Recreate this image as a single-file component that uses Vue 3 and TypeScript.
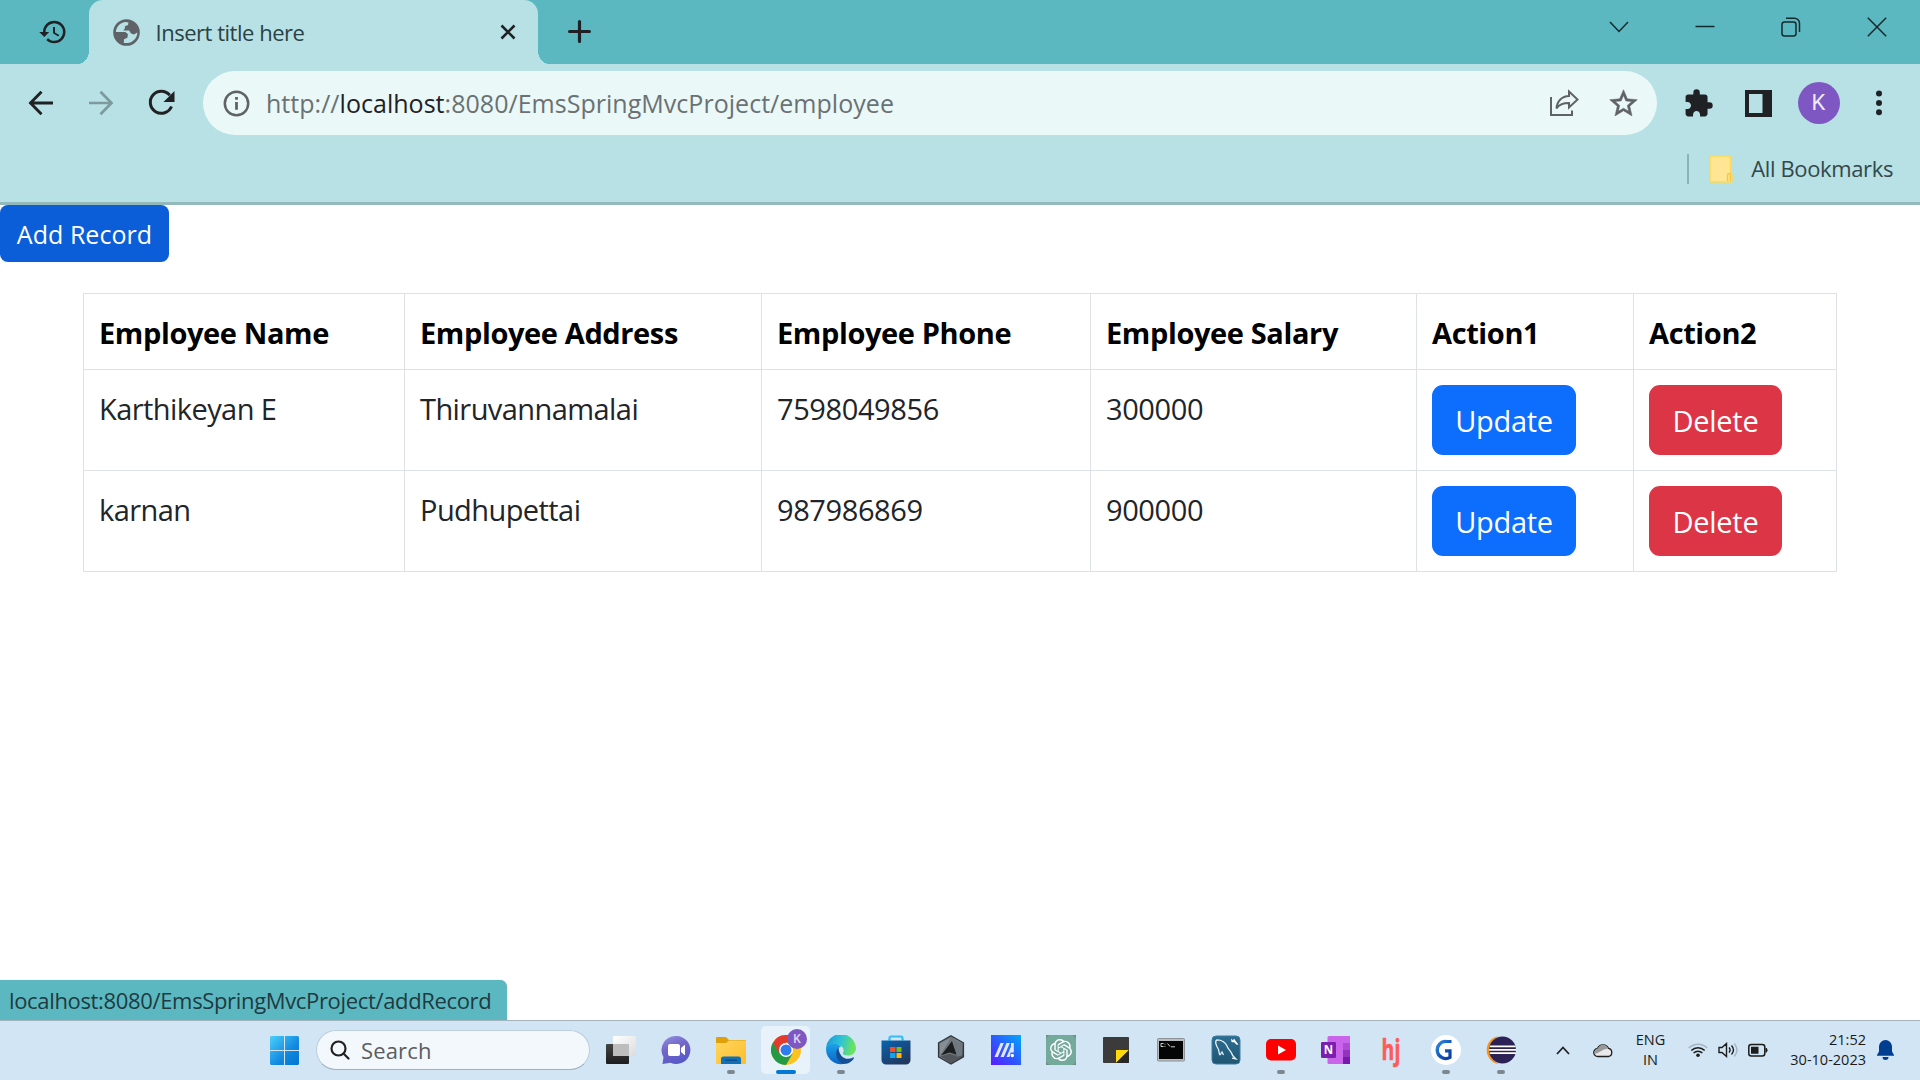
<script setup lang="ts">
interface Employee {
  name: string
  address: string
  phone: string
  salary: string
}

const employees: Employee[] = [
  { name: 'Karthikeyan E', address: 'Thiruvannamalai', phone: '7598049856', salary: '300000' },
  { name: 'karnan', address: 'Pudhupettai', phone: '987986869', salary: '900000' },
]

const headings: string[] = ['Employee Name', 'Employee Address', 'Employee Phone', 'Employee Salary', 'Action1', 'Action2']
</script>

<template>
  <div class="screen">
    <header class="tabstrip">
      <div class="tab-search">
        <svg width="30" height="30" viewBox="0 0 24 24" fill="#202124"><path d="M13 3a9 9 0 0 0-9 9H1l4 4 4-4H6a7 7 0 1 1 7 7c-1.93 0-3.68-.79-4.94-2.06l-1.42 1.42A8.95 8.95 0 0 0 13 21a9 9 0 0 0 0-18zm-1 5v5l4.2 2.5.8-1.2-3.4-2V8z" /></svg>
      </div>
      <div class="tab">
        <svg class="globe" width="27" height="27" viewBox="0 0 27 27">
          <circle cx="13.5" cy="13.5" r="13.3" fill="#5f6368" />
          <path d="M3 11.5C4 7 7.500 3.500 12.500 2.900L15.500 3.500L15 6L11.800 7.200L12 9.200L10.300 11.500H16.200L18 14.500L21 15.500L24.300 13.500C24.500 18.500 20 23.500 14.500 24.100L10.800 23.900V20.500L14.500 18.500L14.800 15L12.500 13.300L3 13Z" fill="#b7e1e4" />
          <path d="M3 13H12L14.500 15.500L13.500 18L10.500 19V23.800C6.500 22.800 3.200 18 3 13Z" fill="#5f6368" />
        </svg>
        <span class="tab-title">Insert title here</span>
        <svg class="tab-close" width="16" height="16" viewBox="0 0 16 16" fill="none" stroke="#202124" stroke-width="2.6"><path d="M1.500 1.500l13 13M14.500 1.500l-13 13" /></svg>
      </div>
      <svg class="new-tab" width="23" height="23" viewBox="0 0 23 23" fill="none" stroke="#202124" stroke-width="3.200" stroke-linecap="round"><path d="M11.500 1.600v19.800M1.600 11.500h19.800" /></svg>
      <div class="window-controls">
        <svg width="20" height="20" viewBox="0 0 20 20"><path d="M1 5l9 9.500L19 5" /></svg>
        <svg width="20" height="20" viewBox="0 0 20 20"><path d="M.5 9.500h19" /></svg>
        <svg width="20" height="20" viewBox="0 0 20 20"><rect x="1" y="5" width="14" height="14" rx="2.500" /><path d="M5 1.300h8.500a5 5 0 0 1 5 5V15" /></svg>
        <svg width="20" height="20" viewBox="0 0 20 20"><path d="M.8.8l18.400 18.400M19.200.8L.8 19.200" /></svg>
      </div>
    </header>

    <div class="toolbar">
      <div class="slot"><svg width="26" height="26" viewBox="0 0 26 26" fill="none" stroke="#202124" stroke-width="2.900"><path d="M25 13H3M13.500 1.800L2.500 13l11 11.200" /></svg></div>
      <div class="slot"><svg width="26" height="26" viewBox="0 0 26 26" fill="none" stroke="#7d9a9d" stroke-width="2.700"><path d="M1 13h22M12.500 1.800l11 11.200-11 11.200" /></svg></div>
      <div class="slot reload"><svg width="28" height="28" viewBox="0 0 28 28" fill="none"><path d="M23.500 17.500A11 11 0 1 1 21.800 6.300" stroke="#202124" stroke-width="3" /><path d="M26.500 2v11H15.500z" fill="#202124" /></svg></div>
      <div class="omnibox">
        <svg class="info" width="27" height="27" viewBox="0 0 27 27" fill="none" stroke="#5f6368" stroke-width="2.500"><circle cx="13.500" cy="13.500" r="11.700" /><path d="M13.500 12v7.800M13.500 7v2.800" stroke-width="2.800" /></svg>
        <span class="url"><span>http://</span><span class="host">localhost</span><span class="path">:8080/EmsSpringMvcProject/employee</span></span>
        <div class="slot"><svg width="30" height="28" viewBox="0 0 30 28" fill="none" stroke="#5f6368" stroke-width="2"><path d="M2 8v18h21v-4.500M20 2.500l8.500 8L20 18.500V14c-6 0-10 1.500-12.500 5.500C8 12 13 7.200 20 7z" /></svg></div>
        <div class="slot star"><svg width="33" height="33" viewBox="0 0 24 24" fill="#5f6368" stroke="#5f6368" stroke-width=".4"><path d="M22 9.240l-7.190-.62L12 2 9.190 8.630 2 9.240l5.460 4.730L5.820 21 12 17.270 18.180 21l-1.630-7.030L22 9.240zM12 15.400l-3.760 2.270 1-4.280-3.320-2.880 4.380-.38L12 6.100l1.710 4.040 4.380.38-3.320 2.880 1 4.280L12 15.400z" /></svg></div>
      </div>
      <div class="slot first"><svg width="31" height="31" viewBox="0 0 24 24" fill="#202124"><path d="M20.500 11H19V7c0-1.100-.9-2-2-2h-4V3.500a2.500 2.500 0 0 0-5 0V5H4c-1.100 0-1.990.9-1.990 2v3.800H3.500c1.490 0 2.700 1.210 2.700 2.700s-1.210 2.700-2.700 2.700H2V20c0 1.100.9 2 2 2h3.800v-1.500c0-1.490 1.210-2.700 2.700-2.700s2.700 1.210 2.700 2.700V22H17c1.100 0 2-.9 2-2v-4h1.500a2.500 2.500 0 0 0 0-5z" /></svg></div>
      <div class="slot"><svg width="27" height="27" viewBox="0 0 27 27"><path fill="#202124" fill-rule="evenodd" d="M0 0h27v27H0zM4 4v19h13.500V4z" /></svg></div>
      <div class="slot profile-slot"><span class="avatar">K</span></div>
      <div class="slot"><svg width="8" height="26" viewBox="0 0 8 26" fill="#202124"><circle cx="4" cy="3.500" r="3" /><circle cx="4" cy="13" r="3" /><circle cx="4" cy="22.300" r="3" /></svg></div>
    </div>

    <div class="bookmarks">
      <span class="divider"></span>
      <svg width="24" height="28" viewBox="0 0 24 28"><path d="M1 2a1 1 0 0 1 1-1h18a1.500 1.500 0 0 1 1.500 1.500v15.500a2 2 0 0 1 1.500 2v6a1 1 0 0 1-1 1H2a1 1 0 0 1-1-1z" fill="#ffe694" stroke="#fdd955" stroke-width="1.500" /><path d="M18.500 26v-6a1.500 1.500 0 0 1 3 0v6" fill="#ffe082" stroke="#f0c84a" stroke-width="1.300" /></svg>
      <span class="bookmark-label">All Bookmarks</span>
    </div>

    <main class="page">
      <button class="btn btn-add">Add Record</button>
      <table>
        <colgroup><col class="c1" /><col class="c2" /><col class="c3" /><col class="c4" /><col class="c5" /><col class="c6" /></colgroup>
        <thead>
          <tr><th v-for="h in headings" :key="h"><span>{{ h }}</span></th></tr>
        </thead>
        <tbody>
          <tr v-for="e in employees" :key="e.name">
            <td>{{ e.name }}</td>
            <td>{{ e.address }}</td>
            <td class="num">{{ e.phone }}</td>
            <td class="num">{{ e.salary }}</td>
            <td class="action"><button class="btn btn-lg btn-update">Update</button></td>
            <td class="action"><button class="btn btn-lg btn-delete">Delete</button></td>
          </tr>
        </tbody>
      </table>
    </main>

    <div class="status"><span>localhost:8080/EmsSpringMvcProject/addRecord</span></div>

    <footer class="taskbar">
      <svg class="start" width="29" height="29" viewBox="0 0 29 29">
        <defs><linearGradient id="win" gradientUnits="userSpaceOnUse" x1="0" y1="0" x2="29" y2="29"><stop offset="0" stop-color="#4bd0fb" /><stop offset=".6" stop-color="#1288df" /><stop offset="1" stop-color="#0275d0" /></linearGradient></defs>
        <path fill="url(#win)" d="M1 0h13v14H0V1zM15 0h13l1 1v13H15zM0 15h14v14H1l-1-1zM15 15h14v13l-1 1H15z" />
      </svg>
      <div class="search">
        <svg width="20" height="20" viewBox="0 0 20 20" fill="none" stroke="#222" stroke-width="2.200" stroke-linecap="round"><circle cx="8.500" cy="8.500" r="7" /><path d="M13.500 13.500l5 5" /></svg>
        <span>Search</span>
      </div>
      <div class="apps">
        <div class="app">
          <svg width="30" height="30" viewBox="0 0 30 30"><defs><linearGradient id="tv" x2="0" y2="1"><stop stop-color="#444" /><stop offset="1" stop-color="#1d1d1d" /></linearGradient><linearGradient id="tv2" x2="1" y2="1"><stop stop-color="#fff" /><stop offset="1" stop-color="#dcdcdc" /></linearGradient></defs><rect x="0" y="9" width="23" height="20" rx="1" fill="url(#tv)" /><rect x="7" y="1" width="23" height="20" rx="1" fill="url(#tv2)" /><path d="M7 9h16v12H7z" fill="#bdbdbd" /></svg>
        </div>
        <div class="app">
          <svg width="30" height="30" viewBox="0 0 30 30"><defs><linearGradient id="ch" x1=".2" y1="0" x2=".6" y2="1"><stop stop-color="#8d8be0" /><stop offset=".4" stop-color="#7467c8" /><stop offset="1" stop-color="#5558c8" /></linearGradient></defs><path d="M15.500 1a14 14 0 1 1-6 26.700L1.500 29l1-7A14 14 0 0 1 15.500 1z" fill="url(#ch)" /><rect x="7" y="9" width="12" height="12" rx="2" fill="#fff" /><path d="M20 13l3.500-3h.5v10h-.5L20 17z" fill="#fff" /></svg>
        </div>
        <div class="app">
          <svg width="30" height="30" viewBox="0 0 30 30"><defs><linearGradient id="fo" x2="1" y2="1"><stop stop-color="#ffd75e" /><stop offset="1" stop-color="#fdbc2c" /></linearGradient></defs><path d="M0 3a1 1 0 0 1 1-1h9l3 3h16a1 1 0 0 1 1 1v6H0z" fill="#dfa00a" /><path d="M0 8h10l3-2.500h16a1 1 0 0 1 1 1V28a1 1 0 0 1-1 1H1a1 1 0 0 1-1-1z" fill="url(#fo)" /><path d="M5 29v-5a2.500 2.500 0 0 1 2.500-2.500h15A2.500 2.500 0 0 1 25 24v5z" fill="#1070b8" /><path d="M9 25.200h12" stroke="#0a4b85" stroke-width="1.300" /></svg>
          <i class="dot"></i>
        </div>
        <div class="app active">
          <svg width="30" height="30" viewBox="0 0 30 30"><circle cx="15" cy="15" r="15" fill="#fcc31e" /><path d="M15 15L2 7.500A15 15 0 0 0 15 30l6.500-11.300z" fill="#249a45" /><path d="M15 15V7.500h13A15 15 0 0 0 2 7.500l6.500 11.200z" fill="#e33b2e" /><circle cx="15" cy="15" r="7" fill="#fff" /><circle cx="15" cy="15" r="5.500" fill="#2f7cee" /></svg>
          <span class="profile">K</span>
          <i class="dot wide"></i>
        </div>
        <div class="app">
          <svg width="30" height="30" viewBox="0 0 30 30"><defs><linearGradient id="e1" x2="1" y2=".2"><stop stop-color="#1b93dd" /><stop offset=".55" stop-color="#2fc4d5" /><stop offset="1" stop-color="#6be35c" /></linearGradient><linearGradient id="e2" x2="0" y2="1"><stop stop-color="#1ba0e8" /><stop offset="1" stop-color="#0b62c4" /></linearGradient></defs><path d="M0 15A15 15 0 0 1 30 13c0 5-4 7.500-8 7.500-3.500 0-6-1.300-5-3 2-3.500-1-7.500-6-7.500C5.500 10 1 12 0 15z" fill="url(#e1)" /><path d="M0 15c1-4.500 6-6.500 10-5.800 2 .3 3.800 1.200 5 2.500-4 1-5 5.300-3.500 9C13 25 17 28 22 27.500A15 15 0 0 1 0 15z" fill="url(#e2)" /><path d="M12.500 12.500c-4.500 5-2 13 4 16 5 1.200 9-1.500 11.500-5.300.3-.6-.2-1-.8-.7-7 3.500-14 0-14.700-10z" fill="#124f95" /></svg>
          <i class="dot"></i>
        </div>
        <div class="app">
          <svg width="30" height="30" viewBox="0 0 30 30"><defs><linearGradient id="st" x2=".6" y2="1"><stop stop-color="#0863b1" /><stop offset="1" stop-color="#22395f" /></linearGradient></defs><path d="M8.500 7V3a1.500 1.500 0 0 1 1.500-1.500h10A1.500 1.500 0 0 1 21.500 3v4" fill="none" stroke="#35bdf3" stroke-width="2" /><path d="M.5 5.500h29V25a4.500 4.500 0 0 1-4.500 4.500H5A4.500 4.500 0 0 1 .5 25z" fill="url(#st)" /><path d="M8.500 5.500V3.500M21.500 5.500v-2" stroke="#35bdf3" stroke-width="2" /><path d="M9 12h5.500v5H9z" fill="#f2502a" /><path d="M15.500 12h5v5h-5z" fill="#7fba10" /><path d="M9 18h5.500v5H9z" fill="#12a4ee" /><path d="M15.500 18h5v5h-5z" fill="#ffb900" /></svg>
        </div>
        <div class="app">
          <svg width="30" height="30" viewBox="0 0 30 30"><defs><linearGradient id="ar" x2="1" y2="1"><stop stop-color="#555b60" /><stop offset=".5" stop-color="#7d858b" /><stop offset="1" stop-color="#34383c" /></linearGradient></defs><path d="M15 .8l12.500 7v14L15 29 2.500 21.800v-14z" fill="url(#ar)" stroke="#33373b" stroke-width="1.200" /><path d="M16 6l4.500 13.500-7-2-8.500 3z" fill="#1c1e20" /><path d="M15 2.500L4.500 19.500 3.500 8.500z" fill="#9aa3aa" opacity=".6" /><path d="M17 5l9 3.500v12l-5 1z" fill="#70787f" /><path d="M4.500 21.500l9-3 9 4-7.500 5.500z" fill="#50565b" /></svg>
        </div>
        <div class="app">
          <svg width="30" height="30" viewBox="0 0 30 30"><defs><linearGradient id="as" x1="0" y1="1" x2="1" y2="0"><stop stop-color="#5a1cff" /><stop offset=".45" stop-color="#2f55ff" /><stop offset="1" stop-color="#00a8ff" /></linearGradient></defs><path d="M0 0h30v30H0z" fill="url(#as)" /><path d="M3.500 22L9.500 8h3.300L6.800 22zM9.500 22l6-14h3.300l-6 14zM15.500 22l2.700-6.300L20 11.500V8h2.800v9.500H20v-1L18.500 22z" fill="#dfe6ff" /><circle cx="21.300" cy="20.500" r="1.700" fill="#fff" /></svg>
        </div>
        <div class="app">
          <svg width="30" height="30" viewBox="0 0 30 30"><path d="M0 0h30v30H0z" fill="#6f8d84" /><rect width="30" height="30" rx="5" fill="#74aa9c" /><svg x="4" y="4" width="22" height="22" viewBox="0 0 24 24"><path fill="#fff" d="M22.282 9.821a5.985 5.985 0 0 0-.516-4.910 6.046 6.046 0 0 0-6.510-2.900A6.065 6.065 0 0 0 4.981 4.182a5.985 5.985 0 0 0-3.998 2.900 6.046 6.046 0 0 0 .743 7.097 5.980 5.980 0 0 0 .511 4.911 6.051 6.051 0 0 0 6.515 2.900A5.985 5.985 0 0 0 13.260 24a6.056 6.056 0 0 0 5.772-4.206 5.990 5.990 0 0 0 3.998-2.900 6.056 6.056 0 0 0-.748-7.073zM13.260 22.430a4.476 4.476 0 0 1-2.876-1.041l.142-.08 4.778-2.758a.795.795 0 0 0 .393-.681v-6.737l2.020 1.169a.071.071 0 0 1 .038.052v5.583a4.504 4.504 0 0 1-4.495 4.493zM3.600 18.304a4.471 4.471 0 0 1-.535-3.014l.142.085 4.783 2.758a.771.771 0 0 0 .780 0l5.843-3.368v2.332a.08.08 0 0 1-.033.062L9.740 19.950a4.500 4.500 0 0 1-6.140-1.646zM2.341 7.896a4.485 4.485 0 0 1 2.365-1.973V11.600a.766.766 0 0 0 .388.677l5.815 3.354-2.020 1.169a.076.076 0 0 1-.071 0l-4.830-2.787A4.504 4.504 0 0 1 2.341 7.872zm16.596 3.856l-5.833-3.388L15.119 7.200a.076.076 0 0 1 .071 0l4.830 2.791a4.494 4.494 0 0 1-.676 8.105v-5.678a.79.79 0 0 0-.407-.667zm2.010-3.024l-.141-.085-4.774-2.782a.776.776 0 0 0-.785 0L9.409 9.230V6.897a.066.066 0 0 1 .028-.061l4.830-2.787a4.499 4.499 0 0 1 6.680 4.660zM8.307 12.863l-2.020-1.164a.08.08 0 0 1-.038-.057V6.075a4.499 4.499 0 0 1 7.376-3.454l-.142.081L8.704 5.460a.795.795 0 0 0-.393.681zm1.097-2.365l2.602-1.500 2.607 1.500v2.999l-2.597 1.500-2.607-1.500z" /></svg></svg>
        </div>
        <div class="app">
          <svg width="30" height="30" viewBox="0 0 30 30"><rect x="2" y="2" width="26" height="26" rx="1" fill="#3b3b3b" /><path d="M15 15h13L15 28z" fill="#ffd90a" /><path d="M28 15v12a1 1 0 0 1-1 1H15z" fill="#272727" /></svg>
        </div>
        <div class="app">
          <svg width="30" height="30" viewBox="0 0 30 30"><rect x="1.500" y="3.500" width="27" height="22.500" rx="1" fill="#b9bcc0" stroke="#8e9296" /><path d="M3 6h24v18H3z" fill="#050505" /><path d="M5 8.500h2.500M5 8.500v3h2.500M9 8.800v.8M9 11v.8M11.500 8.500l2.500 3M15 11.800h4" fill="none" stroke="#d0d0d0" /></svg>
        </div>
        <div class="app">
          <svg width="30" height="30" viewBox="0 0 30 30"><defs><linearGradient id="my" x2="0" y2="1"><stop stop-color="#2c6d93" /><stop offset="1" stop-color="#1f5672" /></linearGradient></defs><rect x="1" y="1" width="28" height="28" rx="4" fill="url(#my)" stroke="#3f7c9f" /><path d="M9 20c-1.500-2-.5-4-2-6.500C5 10 3.500 6 6 4.800c5 0 8.500 3 10 6.200 1 3 3 4 4.500 7 .5 2.500 2 3.500 4.500 6l-4-.8M9 20l2-3 1.500 3" fill="none" stroke="#e6f0f5" stroke-width="1.300" /><path d="M20 3.500l2 2 1-2 2 3 2.500 3-2 .3-2-2.300-3-.5z" fill="#fff" /></svg>
        </div>
        <div class="app">
          <svg width="30" height="30" viewBox="0 0 30 30"><rect y="4" width="30" height="21.500" rx="5" fill="#f00" /><path d="M12 10.500l8 4.500-8 4.500z" fill="#fff" /></svg>
          <i class="dot"></i>
        </div>
        <div class="app">
          <svg width="30" height="30" viewBox="0 0 30 30"><path d="M8 1h21v28H8a1.500 1.500 0 0 1-1.500-1.500v-25A1.500 1.500 0 0 1 8 1z" fill="#ca64ea" /><path d="M22 8h7v7h-7z" fill="#ae4bd5" /><path d="M22 15h7v7h-7z" fill="#9332bf" /><path d="M22 22h7v7h-7z" fill="#7719aa" /><rect y="7" width="15" height="16" rx="1.200" fill="#7b20ac" /><text x="7.500" y="19" text-anchor="middle" font-family="'Open Sans',sans-serif" font-weight="700" font-size="11.500" fill="#fff">N</text></svg>
        </div>
        <div class="app"><span class="hj">hj</span></div>
        <div class="app">
          <svg width="30" height="30" viewBox="0 0 30 30"><defs><linearGradient id="gg" x2="1" y2="1"><stop stop-color="#2a8be6" /><stop offset=".6" stop-color="#1450b0" /><stop offset="1" stop-color="#0a3a9e" /></linearGradient></defs><circle cx="15" cy="15" r="15" fill="#fff" /><path d="M20.500 6.500h-5a8.500 8.500 0 1 0 3.500 15.800V15.800h-5" fill="none" stroke="url(#gg)" stroke-width="3.200" /></svg>
          <i class="dot"></i>
        </div>
        <div class="app">
          <svg width="30" height="30" viewBox="0 0 30 30"><path d="M12.500 1A14.200 14.200 0 0 0 12.500 29C8 26 5 21 5 15S8 4 12.500 1z" fill="#f7941e" /><circle cx="16.500" cy="15" r="13.500" fill="#2c2255" /><path d="M4 10.500h25.500v1.800H3.500zM3 14h27v1.800H3zM3.500 17.300H30V19H4z" fill="#fff" /></svg>
          <i class="dot"></i>
        </div>
      </div>
      <svg class="chevron" width="14" height="9" viewBox="0 0 14 9" fill="none" stroke="#222" stroke-width="1.800"><path d="M1 8l6-6.500L13 8" /></svg>
      <svg class="cloud" width="20" height="15" viewBox="0 0 20 15"><path d="M5 13.500a4 4 0 0 1-.5-8A6 6 0 0 1 15.500 5.300a4.200 4.200 0 0 1 0 8.200z" fill="#e9e9e9" stroke="#1e1e1e" stroke-width="1.300" /><path d="M1.800 8.500L3 6l2-.8A5.600 5.600 0 0 1 10 1.800c2.500 0 4 1.200 5 3.700L11 6.500 2.500 11z" fill="#999" /></svg>
      <div class="lang"><span>ENG</span><span>IN</span></div>
      <div class="tray">
        <svg width="20" height="16" viewBox="0 0 20 16" fill="none" stroke="#1c1c1c" stroke-width="1.500"><path d="M.8 6a13 13 0 0 1 18.400 0" stroke="#a5b4c0" /><path d="M3.300 8.500a9.500 9.500 0 0 1 13.400 0M5.600 11a6.300 6.300 0 0 1 8.800 0" /><circle cx="10" cy="13.300" r="1.800" fill="#1c1c1c" stroke="none" /></svg>
        <svg width="20" height="16" viewBox="0 0 20 16" fill="none" stroke="#1c1c1c" stroke-width="1.400"><path d="M1 5.500h3l4.500-4v13l-4.500-4H1zM11 5.500c1.300 1.500 1.300 3.500 0 5M13.500 3.500c2.500 2.800 2.500 6.200 0 9" /><path d="M16.200 1.500c3.500 4 3.500 9 0 13" stroke="#a5b4c0" /></svg>
        <svg width="20" height="16" viewBox="0 0 20 16"><rect x=".8" y="2.500" width="16" height="11.500" rx="2.500" fill="none" stroke="#1c1c1c" stroke-width="1.500" /><path d="M3 4.700h7.500v7H3zM17.500 6h1.200l1 2.200-1 2.300h-1.200z" fill="#1c1c1c" /></svg>
      </div>
      <div class="clock"><span>21:52</span><span>30-10-2023</span></div>
      <svg class="bell" width="17" height="20" viewBox="0 0 17 20" fill="#003e92"><path d="M8.500 0a6.500 6.500 0 0 1 6.500 6.500v5l2 3.500v.8H0V15l2-3.500v-5A6.500 6.500 0 0 1 8.500 0zM5.500 17h6a3 3 0 0 1-6 0z" /></svg>
    </footer>
  </div>
</template>

<style>
html,
body {
  margin: 0;
  overflow: hidden;
}
</style>

<style scoped>
.screen {
  position: relative;
  width: 1920px;
  height: 1080px;
  display: flex;
  flex-direction: column;
  background: #fff;
  font-family: 'Open Sans', 'Noto Sans', sans-serif;
  color: #212529;
  overflow: hidden;
  white-space: nowrap;
}
svg {
  display: block;
  flex: none;
}
.tabstrip {
  height: 64px;
  flex: none;
  display: flex;
  background: #5bb8c1;
}
.tab-search {
  width: 89px;
  display: flex;
  align-items: center;
  box-sizing: border-box;
  padding-left: 37.500px;
}
.tab {
  position: relative;
  width: 449px;
  box-sizing: border-box;
  display: flex;
  align-items: center;
  padding: 0 22px 0 24px;
  background: #b7e1e4;
  border-radius: 14px 14px 0 0;
}
.tab::before,
.tab::after {
  content: '';
  position: absolute;
  bottom: 0;
  width: 11px;
  height: 13px;
}
.tab::before {
  left: -11px;
  background: radial-gradient(ellipse 11px 13px at 0 0, transparent 98%, #b7e1e4 100%);
}
.tab::after {
  right: -11px;
  background: radial-gradient(ellipse 11px 13px at 100% 0, transparent 98%, #b7e1e4 100%);
}
.tab-title {
  margin: 0 0 1px 15.500px;
  font-size: 22px;
  line-height: 30px;
  letter-spacing: -0.48px;
  color: #2b4144;
  flex: 1;
}
.new-tab {
  margin: 20px 0 0 30px;
}
.window-controls {
  margin-left: auto;
  margin-right: 33px;
  padding-top: 17px;
  display: flex;
  gap: 66px;
}
.window-controls svg {
  fill: none;
  stroke: #14292c;
  stroke-width: 1.500;
}
.toolbar {
  height: 78px;
  flex: none;
  display: flex;
  align-items: center;
  padding-left: 11px;
  background: #b7e1e4;
}
.slot {
  width: 60px;
  flex: none;
  display: flex;
  justify-content: center;
  align-items: center;
}
.reload {
  width: 62px;
}
.first {
  margin-left: 11px;
}
.profile-slot {
  width: 61px;
}
.omnibox {
  margin-left: 10px;
  box-sizing: border-box;
  width: 1454px;
  height: 64px;
  border-radius: 32px;
  background: #ebf8f8;
  display: flex;
  align-items: center;
  padding: 0 4px 0 20px;
}
.star {
  width: 59px;
}
.url {
  flex: 1;
  margin-left: 16px;
  font-size: 25px;
  line-height: 34px;
  letter-spacing: 0.03px;
  color: #6a7173;
}
.host {
  color: #202124;
}
.avatar {
  width: 42px;
  height: 42px;
  border-radius: 50%;
  background: #7e57c2;
  color: #f0e8fb;
  font: 22px/42px Roboto, sans-serif;
  text-align: center;
}
.bookmarks {
  height: 60px;
  flex: none;
  display: flex;
  align-items: flex-start;
  justify-content: flex-end;
  box-sizing: content-box;
  padding-right: 27px;
  background: #b7e1e4;
  border-bottom: 3px solid #94b9bd;
}
.divider {
  width: 2px;
  height: 30px;
  margin: 12px 20px 0 0;
  background: #8db2b7;
}
.bookmarks svg {
  margin-top: 13px;
}
.bookmark-label {
  margin: 11px 0 0 18px;
  font-size: 22px;
  line-height: 30px;
  letter-spacing: -0.38px;
  color: #33484b;
}
.page {
  flex: 1;
  display: flex;
  flex-direction: column;
  align-items: flex-start;
}
.btn {
  display: block;
  border: 0;
  padding: 0;
  color: #fff;
  font-family: inherit;
  text-align: center;
}
.btn-add {
  width: 169px;
  height: 57px;
  border-radius: 8px;
  background: #0b5ed7;
  font-size: 25px;
  letter-spacing: 0.05px;
}
table {
  table-layout: fixed;
  width: 1753px;
  margin: 31px 0 0 83px;
  border-collapse: collapse;
  font-size: 29px;
  line-height: 44px;
}
.c1 { width: 321px; }
.c2 { width: 357px; }
.c3 { width: 329px; }
.c4 { width: 326px; }
.c5 { width: 217px; }
.c6 { width: 203px; }
th,
td {
  box-sizing: border-box;
  border: 1px solid #dee2e6;
  padding: 17px 0 0 15px;
  text-align: left;
  vertical-align: top;
}
thead tr {
  height: 76px;
}
tbody tr {
  height: 101px;
}
th {
  color: #000;
  font-weight: 700;
  letter-spacing: -0.38px;
}
td {
  letter-spacing: -0.57px;
}
.num {
  letter-spacing: -0.4px;
}
.action {
  padding-top: 15px;
}
.btn-lg {
  height: 70px;
  border-radius: 11px;
  font-size: 29px;
  letter-spacing: -0.3px;
}
td .btn-update {
  width: 144px;
  background: #0d6efd;
}
td .btn-delete {
  width: 133px;
  background: #dc3545;
}
.status {
  position: absolute;
  left: 0;
  top: 980px;
  width: 507px;
  height: 40px;
  box-sizing: border-box;
  padding-left: 9px;
  border-radius: 0 7px 0 0;
  background: #5bb8c1;
  color: #1f3a40;
  font-size: 22px;
  line-height: 41px;
  letter-spacing: -0.34px;
  box-shadow: 0 0 1px #8aa;
}
.taskbar {
  height: 60px;
  flex: none;
  box-sizing: border-box;
  border-top: 1px solid #a6b4c0;
  padding-bottom: 1px;
  background: #d2e5f4;
  display: flex;
  align-items: center;
  color: #1b1b1b;
}
.start {
  margin-left: 270px;
}
.search {
  box-sizing: border-box;
  width: 274px;
  height: 40px;
  margin: 0 3px 0 17px;
  border-radius: 20px;
  border: 1px solid #bccddc;
  border-bottom-color: #9fb0bf;
  background: #f3f8fd;
  display: flex;
  align-items: center;
  padding-left: 13px;
  color: #5a5d60;
  font-size: 22px;
}
.search span {
  margin-left: 11px;
  letter-spacing: 0.15px;
}
.apps {
  display: flex;
}
.app {
  position: relative;
  width: 55px;
  height: 48px;
  display: flex;
  align-items: center;
  justify-content: center;
}
.app svg {
  margin-bottom: 1px;
}
.active {
  width: 49px;
  margin: 0 3px;
  border-radius: 5px;
  background: #e8f2fa;
}
.dot {
  position: absolute;
  left: 50%;
  bottom: 0;
  width: 8px;
  height: 4px;
  margin-left: -4px;
  border-radius: 2px;
  background: #7c8790;
}
.wide {
  width: 20px;
  margin-left: -10px;
  background: #0078d4;
}
.profile {
  position: absolute;
  right: 3px;
  top: 3px;
  width: 20px;
  height: 20px;
  border-radius: 50%;
  background: #7e57c2;
  color: #e0d4f2;
  font: 500 12px/20px Roboto, sans-serif;
  text-align: center;
}
.hj {
  margin-bottom: 3px;
  font-family: 'Open Sans', sans-serif;
  font-weight: 700;
  font-size: 29px;
  line-height: 30px;
  color: #ff5a5a;
  -webkit-text-stroke: 0.6px #ff5a5a;
  transform: scaleX(0.67);
}
.chevron {
  margin-left: 27.500px;
}
.cloud {
  margin-left: 23px;
}
.lang,
.clock {
  display: flex;
  flex-direction: column;
  font-size: 14.500px;
  line-height: 20px;
  padding-bottom: 1px;
}
.lang {
  width: 40px;
  margin-left: 18px;
  align-items: center;
}
.tray {
  margin-left: 17px;
  display: flex;
  gap: 10px;
}
.clock {
  margin-left: auto;
  align-items: flex-end;
}
.bell {
  margin: 0 26px 0 11px;
}
</style>
